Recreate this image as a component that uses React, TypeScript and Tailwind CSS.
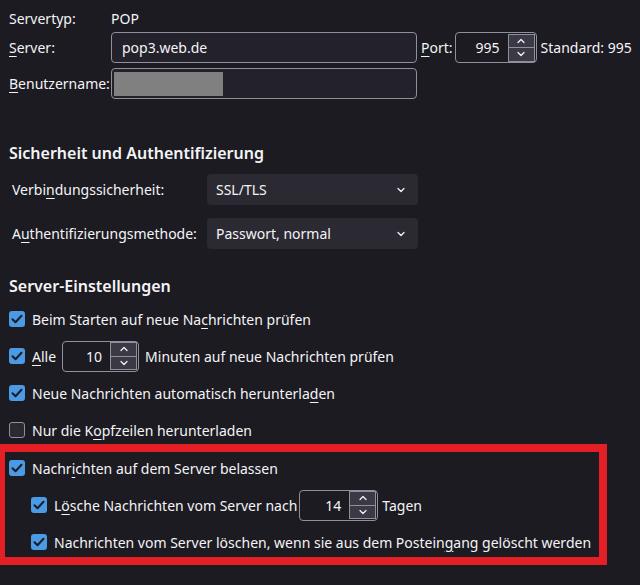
import { ChevronDown, ChevronUp } from 'lucide-react'
import type { ReactNode } from 'react'

const font = { fontFamily: '"Segoe UI", "Noto Sans", sans-serif' }

function Key({ children }: { children: ReactNode }) {
  return <span className="underline underline-offset-[3px] decoration-1">{children}</span>
}

function Checkbox({ checked }: { checked: boolean }) {
  if (!checked) {
    return (
      <span className="size-4 shrink-0 rounded-[3px] border border-[#8f8f9d] bg-[#2b2a33]" />
    )
  }
  return (
    <span className="flex size-4 shrink-0 items-center justify-center rounded-[3px] bg-[#4a9ae6]">
      <svg viewBox="0 0 16 16" className="size-4" fill="none">
        <path d="M3.5 8.2l3 3 6-6.4" stroke="#1c1b22" strokeWidth="2" strokeLinecap="round" strokeLinejoin="round" />
      </svg>
    </span>
  )
}

function Spinner({ value, className }: { value: string; className: string }) {
  return (
    <div className={`flex h-[31px] shrink-0 items-center rounded-[4px] border border-[#8f8f9d] bg-[#1c1b22] ${className}`}>
      <span className="flex-1 pr-[8px] text-right">{value}</span>
      <div className="mr-[1px] flex h-[28px] w-[27px] flex-col border border-[#8f8f9d]">
        <span className="flex flex-1 items-center justify-center border-b border-[#8f8f9d] bg-[#3a3944]">
          <ChevronUp size={12} strokeWidth={2.5} />
        </span>
        <span className="flex flex-1 items-center justify-center bg-[#3a3944]">
          <ChevronDown size={12} strokeWidth={2.5} />
        </span>
      </div>
    </div>
  )
}

function Select({ value }: { value: string }) {
  return (
    <div className="ml-auto flex h-[31px] w-[211px] shrink-0 items-center justify-between rounded-[4px] bg-[#2b2a33] pl-[9px] pr-[11px]">
      <span>{value}</span>
      <ChevronDown size={12} strokeWidth={2.5} />
    </div>
  )
}

function CheckRow({ checked, children, className = '' }: { checked: boolean; children: ReactNode; className?: string }) {
  return (
    <div className={`flex h-[28px] items-center gap-[7px] whitespace-nowrap ${className}`}>
      <Checkbox checked={checked} />
      <div className="flex items-center">{children}</div>
    </div>
  )
}

export default function App() {
  return (
    <div style={font} className="h-[585px] w-[640px] overflow-hidden whitespace-nowrap bg-[#1c1b22] text-[14px] text-[#f4f4f6]">
      <div className="pl-[9px]">
        <div className="mt-[7px] flex h-[22px] items-center">
          <span className="w-[102px]">Servertyp:</span>
          <span>POP</span>
        </div>
        <div className="mt-[3px] flex h-[31px] items-center">
          <span className="w-[102px]">
            <Key>S</Key>erver:
          </span>
          <div className="flex h-[31px] w-[306px] items-center rounded-[4px] border border-[#8f8f9d] bg-[#23222b] pl-[10px]">
            pop3.web.de
          </div>
          <span className="ml-[4px]">
            <Key>P</Key>ort:
          </span>
          <Spinner value="995" className="ml-[2px] w-[82px]" />
          <span className="ml-[4px]">Standard: 995</span>
        </div>
        <div className="mt-[5px] flex h-[31px] items-center">
          <span className="w-[102px]">
            <Key>B</Key>enutzername:
          </span>
          <div className="flex h-[31px] w-[306px] items-center rounded-[4px] border border-[#8f8f9d] bg-[#23222b] pl-[2px]">
            <div className="h-[24px] w-[109px] bg-[#808080]" />
          </div>
        </div>

        <div className="mt-[42px] flex h-[24px] items-center text-[16px] font-semibold">
          Sicherheit und Authentifizierung
        </div>
        <div className="mt-[9px] flex h-[31px] w-[409px] items-center pl-[3px]">
          <span>
            Verbi<Key>n</Key>dungssicherheit:
          </span>
          <Select value="SSL/TLS" />
        </div>
        <div className="mt-[13px] flex h-[31px] w-[409px] items-center pl-[3px]">
          <span>
            A<Key>u</Key>thentifizierungsmethode:
          </span>
          <Select value="Passwort, normal" />
        </div>

        <div className="mt-[25px] flex h-[24px] items-center text-[16px] font-semibold">
          Server-Einstellungen
        </div>
        <CheckRow checked className="mt-[7px]">
          <span>
            Beim Starten auf neue Na<Key>c</Key>hrichten prüfen
          </span>
        </CheckRow>
        <CheckRow checked className="mt-[9px]">
          <span>
            <Key>A</Key>lle
          </span>
          <Spinner value="10" className="ml-[6px] w-[77px]" />
          <span className="ml-[6px]">Minuten auf neue Nachrichten prüfen</span>
        </CheckRow>
        <CheckRow checked className="mt-[9px]">
          <span>
            Neue Nachrichten automatisch herunterla<Key>d</Key>en
          </span>
        </CheckRow>
        <CheckRow checked={false} className="mt-[9px]">
          <span>
            Nur die K<Key>o</Key>pfzeilen herunterladen
          </span>
        </CheckRow>
      </div>

      <div className="w-[607px] border-[8px] border-l-[5px] border-[#e51f26] pb-[1px] pl-[4px]">
        <CheckRow checked className="mt-[2px]">
          <span>
            Nachr<Key>i</Key>chten auf dem Server belassen
          </span>
        </CheckRow>
        <CheckRow checked className="mt-[9px] pl-[22px]">
          <span>
            L<Key>ö</Key>sche Nachrichten vom Server nach
          </span>
          <Spinner value="14" className="ml-[2px] w-[79px]" />
          <span className="ml-[4px]">Tagen</span>
        </CheckRow>
        <CheckRow checked className="mt-[9px] pl-[22px]">
          <span>
            Nachrichten vom Server löschen, wenn sie aus dem Postein<Key>g</Key>ang gelöscht werden
          </span>
        </CheckRow>
      </div>
    </div>
  )
}
